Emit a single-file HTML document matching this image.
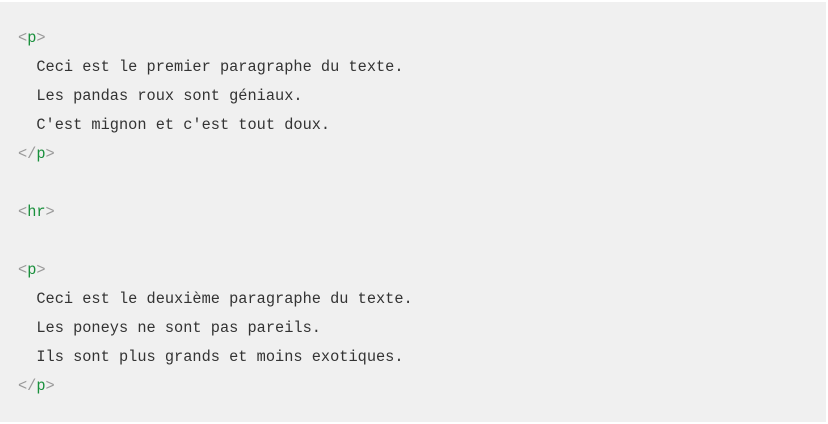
<!DOCTYPE html>
<html><head><style>
html,body{margin:0;padding:0;background:#fff;}
.box{position:absolute;left:0;top:2px;width:826px;height:420px;background:#f0f0f0;}
pre{margin:0;position:absolute;left:18px;top:22px;font-family:"Liberation Mono",monospace;font-size:15.3px;line-height:29px;color:#333;}
.b{color:#999}.t{color:#19903c}
</style></head><body><div class="box"><pre><span class="b">&lt;</span><span class="t">p</span><span class="b">&gt;</span>
  Ceci est le premier paragraphe du texte.
  Les pandas roux sont géniaux.
  C'est mignon et c'est tout doux.
<span class="b">&lt;/</span><span class="t">p</span><span class="b">&gt;</span>

<span class="b">&lt;</span><span class="t">hr</span><span class="b">&gt;</span>

<span class="b">&lt;</span><span class="t">p</span><span class="b">&gt;</span>
  Ceci est le deuxième paragraphe du texte.
  Les poneys ne sont pas pareils.
  Ils sont plus grands et moins exotiques.
<span class="b">&lt;/</span><span class="t">p</span><span class="b">&gt;</span></pre></div></body></html>
